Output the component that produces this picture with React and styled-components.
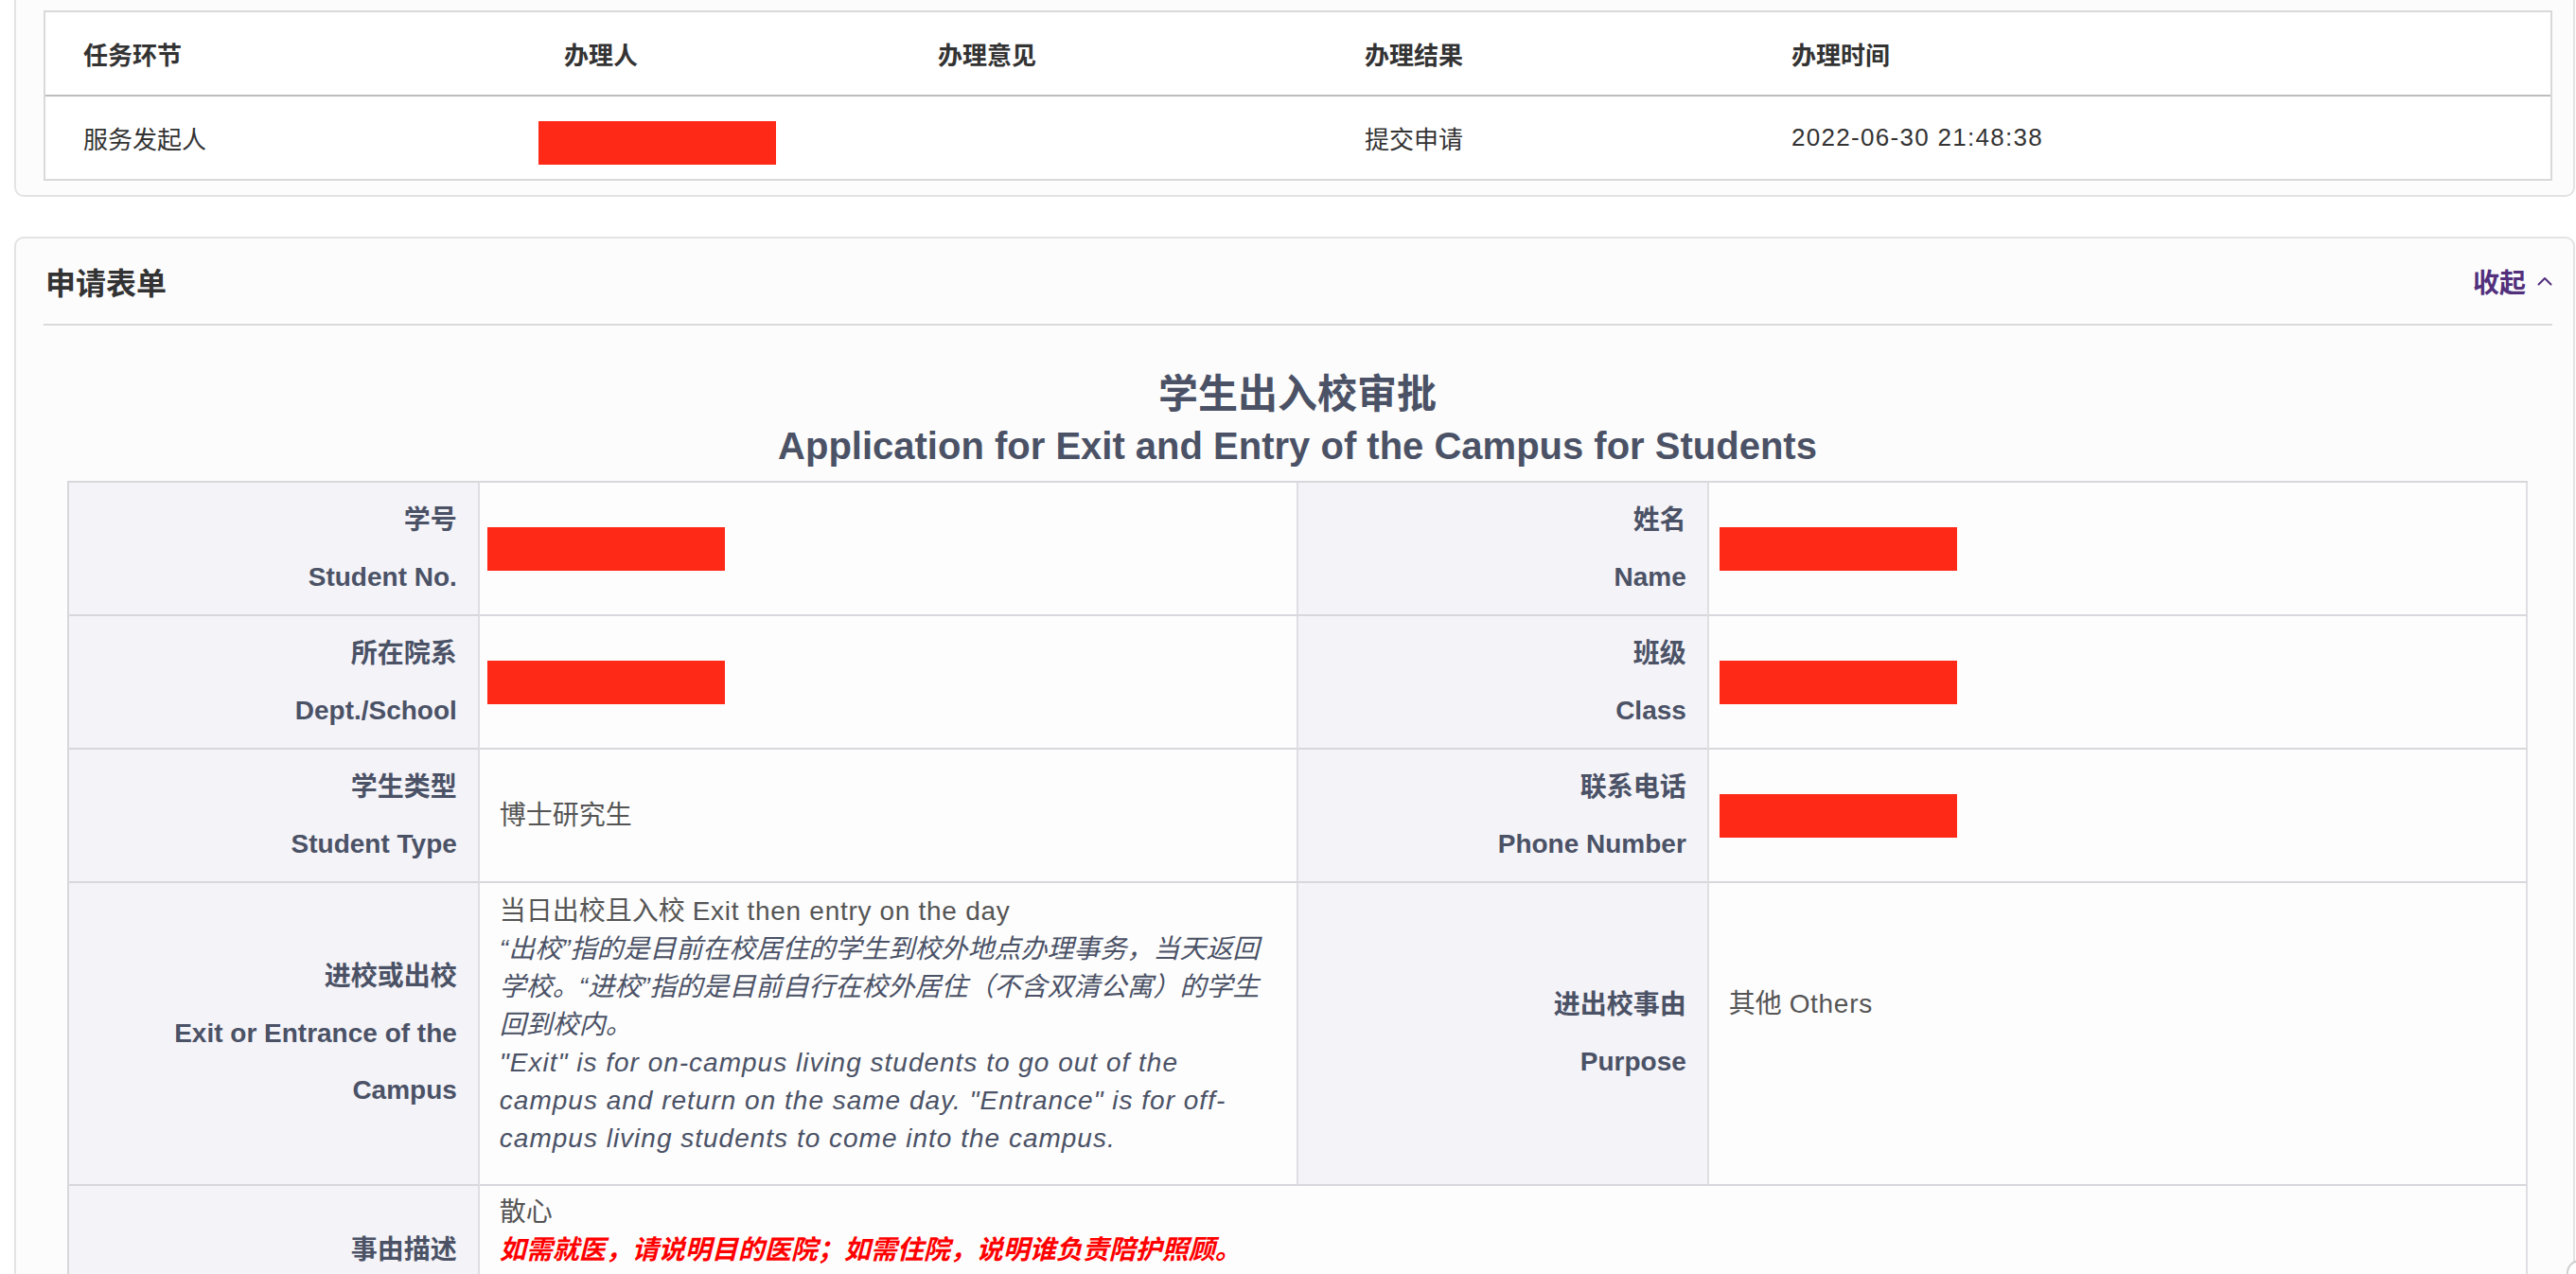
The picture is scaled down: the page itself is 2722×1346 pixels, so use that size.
import React from 'react';
import styled, { createGlobalStyle } from 'styled-components';

const GlobalStyle = createGlobalStyle`
  html, body {
    margin: 0;
    padding: 0;
    background: #fff;
    overflow: hidden;
  }

  body {
    font-family: "Liberation Sans", "Noto Sans CJK SC", sans-serif;
    color: #333;
  }

  * {
    box-sizing: border-box;
  }
`;

const Page = styled.div`
  display: flex;
  flex-direction: column;
  gap: 42px;
  padding: 0 1px 0 15px;
`;

const Card = styled.section`
  background: #fcfcfc;
  border: 2px solid #e3e3e3;
  border-radius: 10px;
  margin-top: ${(p) => (p.$first ? '-10px' : '0')};
  padding: ${(p) => (p.$first ? '19px 22px 15px 29px' : '0 22px 0 29px')};
`;

// flow table (top card)
const FlowTable = styled.table`
  width: 100%;
  table-layout: fixed;
  border-collapse: separate;
  border-spacing: 0;
  background: #fff;
  border: 2px solid #d9d9d9;
  font-size: 26px;
  color: #333;
`;

const Col = styled.col`
  width: ${(p) => p.$w}px;
`;

const Th = styled.th`
  height: 89px;
  padding: 0 0 0 40px;
  text-align: left;
  font-weight: bold;
  border-bottom: 2px solid #bdbdbd;
  vertical-align: middle;
`;

const Td = styled.td`
  height: 87px;
  padding: 0 0 0 40px;
  vertical-align: middle;
  white-space: nowrap;
`;

const Latin = styled.span`
  letter-spacing: ${(p) => p.$ls || 0.7}px;
`;

const Redact = styled.span`
  display: inline-block;
  width: 251px;
  height: 46px;
  background: #ff2918;
  vertical-align: middle;
  margin-left: ${(p) => p.$shift || 0}px;
  margin-top: ${(p) => p.$drop || 0}px;
`;

// form card
const CardHeader = styled.header`
  display: flex;
  align-items: center;
  justify-content: space-between;
  height: 92px;
  border-bottom: 2px solid #dadada;
`;

const CardTitle = styled.h2`
  margin: 0 0 0 2px;
  font-size: 32px;
  font-weight: bold;
  color: #333;
`;

const Toggle = styled.button`
  display: flex;
  align-items: center;
  gap: 12px;
  padding: 0;
  border: 0;
  background: none;
  font: inherit;
  font-size: 28px;
  font-weight: bold;
  color: #52307c;
  cursor: pointer;
`;

const FormBody = styled.div`
  padding: 0 26px 0 25px;
`;

const FormTitle = styled.div`
  padding: 45px 0 9px;
  text-align: center;
  line-height: 55px;
  font-weight: bold;
  color: #4b5266;

  .zh {
    font-size: 42px;
  }

  .en {
    font-size: 40px;
  }
`;

const FormTable = styled.table`
  width: 100%;
  table-layout: fixed;
  border-collapse: separate;
  border-spacing: 0;
  border-top: 2px solid #d8d7dc;
  border-left: 2px solid #d8d7dc;
  font-size: 28px;
`;

const LabelCell = styled.td`
  width: 16.7%;
  padding: 9.5px 22px 9.5px 16px;
  background: #f4f3f8;
  border-right: 2px solid #dfdee3;
  border-bottom: 2px solid #d8d7dc;
  text-align: right;
  vertical-align: middle;
  line-height: 60px;
  font-weight: bold;
  color: #4b5266;

  span {
    display: block;
  }
`;

const ValueCell = styled.td`
  width: 33.3%;
  padding: ${(p) => p.$pt || 10}px 21px ${(p) => p.$pb || 10}px;
  background: #fdfdfd;
  border-right: 2px solid #dfdee3;
  border-bottom: 2px solid #d8d7dc;
  vertical-align: middle;
  line-height: 40px;
  color: #555;
`;

const Note = styled.div`
  font-style: italic;
  color: #4b5266;
  letter-spacing: ${(p) => p.$ls || 0}px;
`;

const Warn = styled.div`
  font-style: italic;
  font-weight: bold;
  color: #ff0000;
`;

const FloatCorner = styled.div`
  position: fixed;
  left: 2712px;
  top: 1331px;
  width: 80px;
  height: 80px;
  border: 2px solid #cfcfcf;
  border-radius: 14px;
  background: #fff;
`;

const Label = ({ zh, en }) => (
  <LabelCell>
    <span>{zh}</span>
    {en && <span>{en}</span>}
  </LabelCell>
);

const ChevronUp = () => (
  <svg width="16" height="10" viewBox="0 0 16 10" fill="none">
    <polyline points="1.5,8.5 8,2 14.5,8.5" stroke="#52307c" strokeWidth="2" strokeLinecap="round" strokeLinejoin="round" />
  </svg>
);

const flowCols = [508, 395, 451, 451, 842];
const flowHeads = ['任务环节', '办理人', '办理意见', '办理结果', '办理时间'];

const basicRows = [
  [{ zh: '学号', en: 'Student No.' }, null, { zh: '姓名', en: 'Name' }, null],
  [{ zh: '所在院系', en: 'Dept./School' }, null, { zh: '班级', en: 'Class' }, null],
  [{ zh: '学生类型', en: 'Student Type' }, '博士研究生', { zh: '联系电话', en: 'Phone Number' }, null],
];

const App = () => (
  <>
    <GlobalStyle />
    <Page>
      <Card $first>
        <FlowTable>
          <colgroup>
            {flowCols.map((w, i) => (
              <Col key={i} $w={w} />
            ))}
          </colgroup>
          <thead>
            <tr>
              {flowHeads.map((h) => (
                <Th key={h}>{h}</Th>
              ))}
            </tr>
          </thead>
          <tbody>
            <tr>
              <Td>服务发起人</Td>
              <Td>
                <Redact $shift={-27} $drop={10} />
              </Td>
              <Td />
              <Td>提交申请</Td>
              <Td>
                <Latin $ls={1.3}>2022-06-30 21:48:38</Latin>
              </Td>
            </tr>
          </tbody>
        </FlowTable>
      </Card>

      <Card>
        <CardHeader>
          <CardTitle>申请表单</CardTitle>
          <Toggle>
            收起
            <ChevronUp />
          </Toggle>
        </CardHeader>
        <FormBody>
          <FormTitle>
            <div className="zh">学生出入校审批</div>
            <div className="en">Application for Exit and Entry of the Campus for Students</div>
          </FormTitle>
          <FormTable>
            <tbody>
              {basicRows.map((row, r) => (
                <tr key={r}>
                  <Label {...row[0]} />
                  <ValueCell>{row[1] || <Redact $shift={-13} />}</ValueCell>
                  <Label {...row[2]} />
                  <ValueCell>{row[3] || <Redact $shift={-10} />}</ValueCell>
                </tr>
              ))}
              <tr>
                <Label zh="进校或出校" en="Exit or Entrance of the Campus" />
                <ValueCell $pb={28}>
                  <div>
                    当日出校且入校 <Latin>Exit then entry on the day</Latin>
                  </div>
                  <Note>
                    “出校”指的是目前在校居住的学生到校外地点办理事务，当天返回学校。“进校”指的是目前自行在校外居住（不含双清公寓）的学生回到校内。
                  </Note>
                  <Note $ls={1}>
                    "Exit" is for on-campus living students to go out of the campus and return on the same day.
                    "Entrance" is for off-campus living students to come into the campus.
                  </Note>
                </ValueCell>
                <Label zh="进出校事由" en="Purpose" />
                <ValueCell $pb={72}>
                  其他 <Latin>Others</Latin>
                </ValueCell>
              </tr>
              <tr>
                <Label zh="事由描述" />
                <ValueCell colSpan={3} $pt={8} $pb={48}>
                  <div>散心</div>
                  <Warn>如需就医，请说明目的医院；如需住院，说明谁负责陪护照顾。</Warn>
                </ValueCell>
              </tr>
            </tbody>
          </FormTable>
        </FormBody>
      </Card>
    </Page>
    <FloatCorner />
  </>
);

export default App;
